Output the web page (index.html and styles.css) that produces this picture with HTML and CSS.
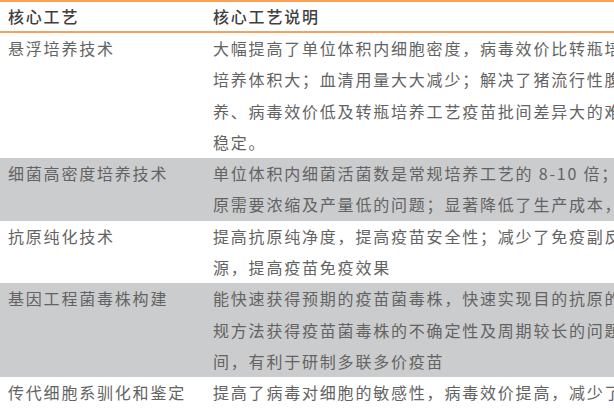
FILE: index.html
```html
<!DOCTYPE html>
<html lang="zh">
<head>
<meta charset="utf-8">
<link rel="stylesheet" href="styles.css">
</head>
<body>
<div class="frame">
<table class="craft">
  <colgroup><col class="c1"><col class="c2"></colgroup>
  <thead>
    <tr><th>核心工艺</th><th>核心工艺说明</th></tr>
  </thead>
  <tbody>
    <tr>
      <td>悬浮培养技术</td>
      <td><span class="ln">大幅提高了单位体积内细胞密度，病毒效价比转瓶培养高 2-5 倍；</span><span class="ln">培养体积大；血清用量大大减少；解决了猪流行性腹泻病毒难培</span><span class="ln">养、病毒效价低及转瓶培养工艺疫苗批间差异大的难题，产品质量</span><span class="ln">稳定。</span></td>
    </tr>
    <tr class="alt">
      <td>细菌高密度培养技术</td>
      <td><span class="ln">单位体积内细菌活菌数是常规培养工艺的 8-10 倍；解决了抗</span><span class="ln">原需要浓缩及产量低的问题；显著降低了生产成本，提高了产品质量</span></td>
    </tr>
    <tr>
      <td>抗原纯化技术</td>
      <td><span class="ln">提高抗原纯净度，提高疫苗安全性；减少了免疫副反应，节省抗原资</span><span class="ln">源，提高疫苗免疫效果</span></td>
    </tr>
    <tr class="alt">
      <td>基因工程菌毒株构建</td>
      <td><span class="ln">能快速获得预期的疫苗菌毒株，快速实现目的抗原的表达；克服了常</span><span class="ln">规方法获得疫苗菌毒株的不确定性及周期较长的问题，缩短研发时</span><span class="ln">间，有利于研制多联多价疫苗</span></td>
    </tr>
    <tr>
      <td>传代细胞系驯化和鉴定</td>
      <td><span class="ln">提高了病毒对细胞的敏感性，病毒效价提高，减少了细胞培养成本；</span><span class="ln">建立了完善的细胞鉴定体系，保证疫苗质量</span></td>
    </tr>
  </tbody>
</table>
</div>
</body>
</html>
```
FILE: styles.css
```css
html, body {
  margin: 0;
  padding: 0;
  background: #ffffff;
}
.frame {
  width: 614px;
  height: 414px;
  overflow: hidden;
}
.craft {
  width: 900px;
  table-layout: fixed;
  border-collapse: collapse;
  font-family: "Noto Sans CJK SC", "Noto Sans", sans-serif;
  font-size: 16px;
  letter-spacing: 1.8px;
  color: #636363;
}
.c1 { width: 205px; }
.c2 { width: 695px; }
.craft th {
  text-align: left;
  font-weight: 500;
  color: #3f3f3f;
  height: 29px;
  padding: 0 0 0 8px;
  line-height: 29px;
  border-top: 2px solid #f6a25f;
  border-bottom: 2px solid #f6a25f;
  vertical-align: middle;
}
.craft td {
  padding: 0 0 0 8px;
  line-height: 31.3px;
  vertical-align: top;
  white-space: nowrap;
  overflow: hidden;
}
.craft .ln {
  display: block;
}
.craft tr.alt td {
  background: #cbcccd;
}
```
